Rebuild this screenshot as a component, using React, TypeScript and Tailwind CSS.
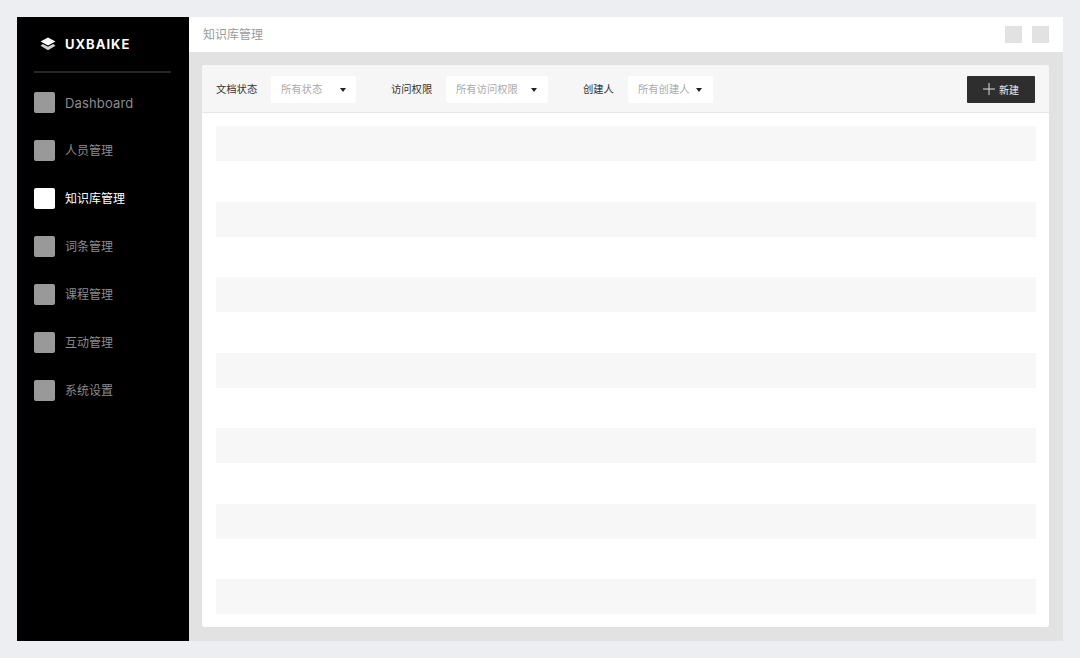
import React from "react";

const menu = ["Dashboard", "人员管理", "知识库管理", "词条管理", "课程管理", "互动管理", "系统设置"];
const rows = [1, 2, 3, 4, 5, 6, 7];

const font = "font-['Noto_Sans_CJK_SC','Noto_Sans',sans-serif]";

const Filter = ({ label, value, labelWidth, width, right }: { label: string; value: string; labelWidth: string; width: string; right: string }) => (
  <div className="flex items-center">
    <span className={`${labelWidth} text-[10.3px] text-[#333]`}>{label}</span>
    <div className={`${width} ${right} h-[27px] flex items-center justify-between pl-[10px] bg-white rounded-[2px] shadow-[0_0_1px_rgba(0,0,0,0.06)] text-[10.3px] text-[#aaa]`}>
      <span>{value}</span>
      <span className="mt-[1px] w-0 h-0 border-x-[3px] border-x-transparent border-t-[4px] border-t-[#222]" />
    </div>
  </div>
);

const App = () => {
  return (
    <div className={`w-[1080px] h-[658px] bg-[#eceef2] p-[17px] ${font}`}>
      <div className="flex h-[624px] w-[1046px]">
        {/* sidebar */}
        <div className="w-[172px] bg-black pl-[17px] pr-[18px] shrink-0">
          <div className="h-[56px] border-b-2 border-[#262626] flex items-center pl-[6px] gap-[9px]">
            <svg width="16" height="14" viewBox="0 0 16 14">
              <path d="M8 0.5 L15.5 4.5 L8 8.5 L0.5 4.5 Z" fill="#fff" />
              <path d="M2.8 7 L8 9.8 L13.2 7 L15.5 8.8 L8 13.2 L0.5 8.8 Z" fill="#d4d4d4" />
            </svg>
            <span className="mt-[2px] text-[13px] font-bold text-white tracking-[1px] font-['Inter',sans-serif]">UXBAIKE</span>
          </div>
          <div className="pt-[19px] flex flex-col gap-[27px]">
            {menu.map((m, i) => (
              <div key={m} className="flex items-center gap-[10px] h-[21px]">
                <div className={`w-[21px] h-[21px] rounded-[2px] ${i === 2 ? "bg-white" : "bg-[#999]"}`} />
                <span
                  className={`leading-[19px] ${i === 2 ? "text-white" : "text-[#8c8c8c]"} ${
                    i === 0 ? "text-[13px] font-['Inter',sans-serif] tracking-[0.15px] mt-[1px]" : "text-[12px] mb-[2px]"
                  }`}
                >
                  {m}
                </span>
              </div>
            ))}
          </div>
        </div>

        {/* main */}
        <div className="flex-1 flex flex-col">
          <div className="h-[35px] bg-white flex items-center justify-between pl-[14px] pr-[14px]">
            <span className="text-[12px] text-[#9a9a9a] mb-[1px]">知识库管理</span>
            <div className="flex gap-[10px]">
              <div className="w-[17px] h-[17px] bg-[#e2e2e2]" />
              <div className="w-[17px] h-[17px] bg-[#e2e2e2]" />
            </div>
          </div>
          <div className="flex-1 bg-[#e2e2e2] pt-[13px] pb-[14px] pl-[13px] pr-[14px] flex">
            <div className="flex-1 bg-white rounded-[3px] flex flex-col overflow-hidden">
              <div className="h-[48px] bg-[#f6f6f6] border-b border-[#e6e6e6] flex items-center justify-between pt-[1px] pl-[14px] pr-[14px]">
                <div className="flex gap-[35px]">
                  <Filter label="文档状态" value="所有状态" labelWidth="w-[55px]" width="w-[85px]" right="pr-[10px]" />
                  <Filter label="访问权限" value="所有访问权限" labelWidth="w-[55px]" width="w-[102px]" right="pr-[11px]" />
                  <Filter label="创建人" value="所有创建人" labelWidth="w-[45px]" width="w-[85px]" right="pr-[11px]" />
                </div>
                <button className="w-[68px] h-[27px] bg-[#2e2e2e] rounded-[1px] flex items-center justify-center gap-[4px] text-[10px] text-[#eee]">
                  <svg width="12" height="12" viewBox="0 0 12 12">
                    <path d="M6 0V12M0 6H12" stroke="#ddd" strokeWidth="1" />
                  </svg>
                  新建
                </button>
              </div>
              <div className="flex-1 flex flex-col justify-between pt-[13px] pb-[13px] pl-[14px] pr-[13px]">
                {rows.map((r) => (
                  <div key={r} className="h-[35px] bg-[#f7f7f7]" />
                ))}
              </div>
            </div>
          </div>
        </div>
      </div>
    </div>
  );
};

export default App;
